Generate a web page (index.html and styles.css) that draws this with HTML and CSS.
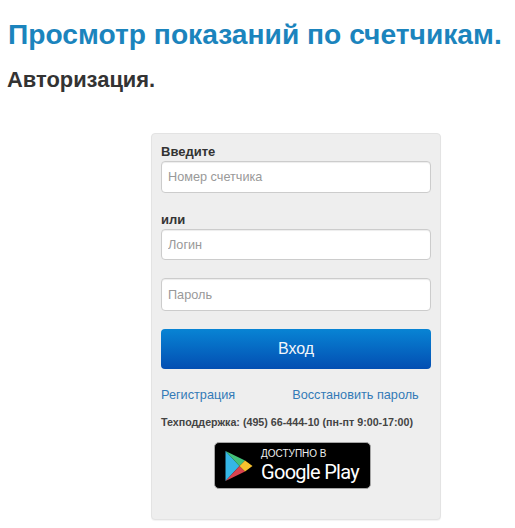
FILE: index.html
```html
<!DOCTYPE html>
<html lang="ru">
<head>
<meta charset="utf-8">
<title>Просмотр показаний по счетчикам</title>
<link rel="stylesheet" href="styles.css">
</head>
<body>
<h1 class="title">Просмотр показаний по счетчикам.</h1>
<h2 class="subtitle">Авторизация.</h2>
<form class="card">
  <label class="label label-first">Введите</label>
  <input class="field field-first" placeholder="Номер счетчика">
  <label class="label label-or">или</label>
  <input class="field field-login" placeholder="Логин">
  <input class="field field-pass" placeholder="Пароль">
  <button class="submit" type="button">Вход</button>
  <div class="links"><a class="link">Регистрация</a><a class="link link-right">Восстановить пароль</a></div>
  <p class="support">Техподдержка: (495) 66-444-10 (пн-пт 9:00-17:00)</p>
  <a class="badge">
    <svg class="play" viewBox="0 0 28 32" width="28" height="32" aria-hidden="true">
      <path d="M0.5 1 L0.5 31 L14.5 16 Z" fill="#35b6e6"/>
      <path d="M0.5 1 L14.5 16 L20 10.5 Z" fill="#43c17a"/>
      <path d="M0.5 31 L14.5 16 L20 21.5 Z" fill="#d9434f"/>
      <path d="M20 10.5 L14.5 16 L20 21.5 L27.5 16 Z" fill="#f7c12e"/>
    </svg>
    <span class="badge-text"><span class="badge-small">ДОСТУПНО В</span><span class="badge-big">Google Play</span></span>
  </a>
</form>
</body>
</html>
```

FILE: styles.css
```css
html, body { margin: 0; padding: 0; background: #fff; }
body { width: 515px; height: 528px; overflow: hidden; font-family: "Liberation Sans", Arial, sans-serif; }
.title { margin: 0; padding: 19px 0 0 8px; font-size: 28.2px; line-height: 30px; font-weight: 700; color: #1b84bd; white-space: nowrap; }
.subtitle { margin: 0; padding: 19px 0 0 7px; font-size: 21.9px; line-height: 24px; font-weight: 700; color: #333; }
.card { box-sizing: border-box; width: 290px; height: 387px; margin: 41px 0 0 151px; padding: 0 9px 0 9px; background: #eee; border: 1px solid #e3e3e3; border-radius: 4px; box-shadow: 0 1px 1px rgba(0,0,0,.05); }
.label { display: block; font-size: 13px; line-height: 16px; font-weight: 700; color: #333; }
.label-first { margin-top: 10px; }
.label-or { margin-top: 19px; }
.field { display: block; box-sizing: border-box; width: 270px; padding: 0 6px; background: #fff; border: 1px solid #ccc; border-radius: 4px; box-shadow: inset 0 1px 1px rgba(0,0,0,.075); font-family: "Liberation Sans", Arial, sans-serif; font-size: 12.7px; color: #555; outline: none; }
.field::placeholder { color: #999; opacity: 1; }
.field-first { height: 32px; margin-top: 1px; }
.field-login { height: 31px; margin-top: 1px; }
.field-pass { height: 33px; margin-top: 18px; }
.submit { display: block; width: 270px; height: 40px; margin-top: 18px; padding: 0; border: 0; border-radius: 4px; background: linear-gradient(#0884d4, #034eb2); color: #f2f6fb; font-family: "Liberation Sans", Arial, sans-serif; font-size: 16px; }
.links { display: flex; margin-top: 18px; font-size: 12.7px; line-height: 16px; white-space: nowrap; }
.link { color: #337ab7; }
.link-right { margin-left: 57px; }
.support { margin: 12px 0 0; font-size: 10.7px; line-height: 14px; font-weight: 700; color: #444; white-space: nowrap; }
.badge { display: flex; align-items: center; box-sizing: border-box; width: 157px; height: 47px; margin: 13px 0 0 53px; padding-left: 10px; background: #000; border: 1px solid #a6a6a6; border-radius: 5px; color: #fff; }
.play { width: 28px; height: 32px; flex: none; }
.badge-text { display: flex; flex-direction: column; margin-left: 8px; }
.badge-small { font-size: 10px; line-height: 12px; color: #eee; }
.badge-big { font-family: Roboto, "Liberation Sans", sans-serif; font-size: 20px; line-height: 24px; letter-spacing: -.7px; white-space: nowrap; }
```
